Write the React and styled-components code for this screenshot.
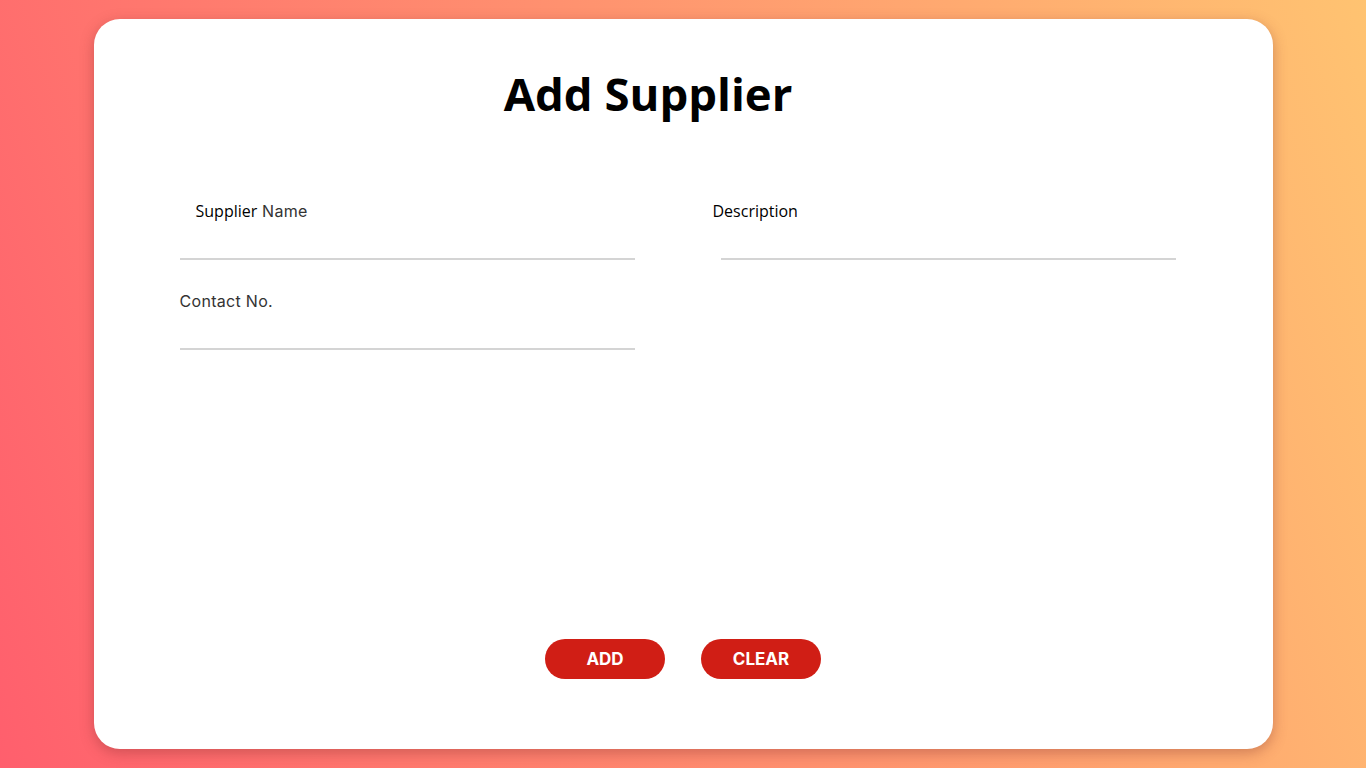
import React from "react";
import styled, { createGlobalStyle } from "styled-components";

const GlobalStyle = createGlobalStyle`
  html, body {
    margin: 0;
    padding: 0;
    height: 100%;
  }
  body {
    background: linear-gradient(72deg, #ff5f6d, #ffc371);
    font-family: "Open Sans", "Liberation Sans", sans-serif;
  }
`;

const Page = styled.div`
  min-height: 768px;
  box-sizing: border-box;
  padding: 19px 0;
  display: flex;
  justify-content: center;
`;

const Card = styled.div`
  width: 1179px;
  height: 730px;
  box-sizing: border-box;
  background: #fff;
  border-radius: 26px;
  box-shadow: 0 4px 14px rgba(120, 40, 40, 0.35);
  display: flex;
  flex-direction: column;
`;

const Title = styled.h1`
  margin: 43px 70px 0 0;
  text-align: center;
  font-family: "Open Sans", "Noto Sans", sans-serif;
  font-weight: 700;
  font-size: 45.5px;
  line-height: 62px;
  color: #000;
`;

const Form = styled.div`
  margin-top: 76px;
  padding: 0 97px 0 86px;
  display: grid;
  grid-template-columns: 455px 455px;
  column-gap: 86px;
  row-gap: 30px;
  flex: 1;
  align-content: start;
`;

const Field = styled.div`
  display: flex;
  flex-direction: column;
`;

const Label = styled.label`
  display: block;
  height: 22px;
  margin-left: ${(p) => p.indent || 0}px;
  font-size: 16px;
  line-height: 22px;
  color: ${(p) => (p.plain ? "#000" : "#333")};
  letter-spacing: ${(p) => (p.plain ? 0 : 0.3)}px;
  font-family: ${(p) =>
    p.plain ? `"Open Sans", sans-serif` : `"Inter", "Lato", sans-serif`};
`;

const Word = styled.span`
  font-family: "Open Sans", sans-serif;
  color: #000;
  letter-spacing: 0;
`;

const Input = styled.input`
  margin-top: 14px;
  border: none;
  border-bottom: 2px solid #d4d4d4;
  outline: none;
  height: 22px;
  padding: 0;
  font-size: 15px;
  background: transparent;
`;

const Actions = styled.div`
  display: flex;
  justify-content: center;
  gap: 36px;
  padding-bottom: 70px;
`;

const Button = styled.button`
  width: 120px;
  height: 40px;
  border: none;
  border-radius: 20px;
  background: #d01e15;
  color: #fff;
  font-family: "Inter", "Liberation Sans", sans-serif;
  font-weight: 700;
  font-size: 17px;
  text-transform: uppercase;
  cursor: pointer;
`;

export default function App() {
  return (
    <>
      <GlobalStyle />
      <Page>
        <Card>
          <Title>Add Supplier</Title>
          <Form>
            <Field>
              <Label indent={16}>
                <Word>Supplier</Word> Name
              </Label>
              <Input />
            </Field>
            <Field>
              <Label plain indent={-8}>
                Description
              </Label>
              <Input />
            </Field>
            <Field>
              <Label>Contact No.</Label>
              <Input />
            </Field>
          </Form>
          <Actions>
            <Button>Add</Button>
            <Button>Clear</Button>
          </Actions>
        </Card>
      </Page>
    </>
  );
}
